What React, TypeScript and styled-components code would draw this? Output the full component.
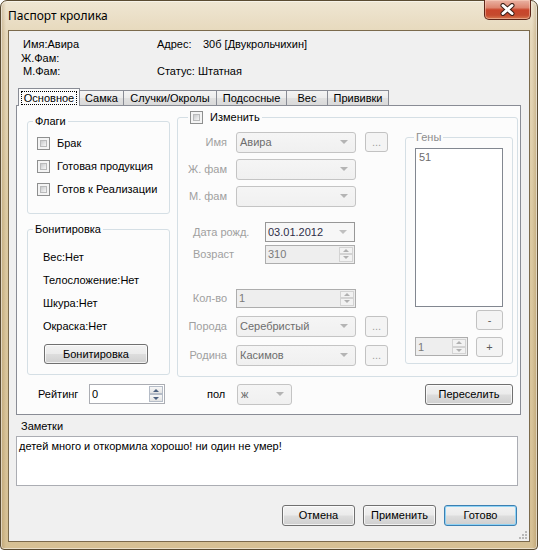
import React from "react";
import styled, { createGlobalStyle, css } from "styled-components";

const GlobalStyle = createGlobalStyle`
  html, body { margin: 0; padding: 0; background: #ffffff; }
  body { font-family: "Liberation Sans", Arial, sans-serif; font-size: 11px; color: #000; }
  *, *::before, *::after { box-sizing: border-box; }
`;

const Window = styled.div`
  width: 538px;
  height: 550px;
  display: flex;
  flex-direction: column;
  border: 1px solid #5a4b32;
  border-radius: 7px 7px 4px 4px;
  background:
    linear-gradient(90deg, rgba(140, 105, 50, 0.3) 0, rgba(140, 105, 50, 0) 5px, rgba(140, 105, 50, 0) calc(100% - 5px), rgba(140, 105, 50, 0.3) 100%),
    linear-gradient(180deg, #efe6d3 0%, #e6d8bb 6%, #dccaa2 40%, #d6c094 100%);
  padding: 0 7px 7px 7px;
  box-shadow: inset 0 0 0 1px rgba(255, 255, 255, 0.5);
`;

const TitleBar = styled.div`
  height: 29px;
  display: flex;
  align-items: flex-start;
  justify-content: space-between;
`;

const Title = styled.div`
  font-family: "Noto Sans", "Liberation Sans", sans-serif;
  font-size: 12px;
  line-height: 16px;
  margin-top: 7px;
  color: #000;
`;

const CloseButton = styled.div`
  width: 47px;
  height: 20px;
  margin: -1px -1px 0 0;
  border: 1px solid #5e2519;
  border-top: none;
  border-radius: 0 0 5px 5px;
  background: linear-gradient(180deg, #eab3a4 0%, #dd8670 40%, #c9452b 52%, #c54a2e 80%, #d7794f 100%);
  box-shadow: inset 0 0 0 1px rgba(255, 220, 200, 0.45);
  display: flex;
  align-items: center;
  justify-content: center;
`;

const Client = styled.div`
  flex: 1;
  position: relative;
  background: #f0f0f0;
  border: 1px solid #7b6a4c;
  display: flex;
  flex-direction: column;
  padding: 0 8px 0 7px;
`;

const Info = styled.div`
  display: grid;
  grid-template-columns: 136px 1fr;
  grid-auto-rows: 13.5px;
  line-height: 13.5px;
  margin: 7px 0 0 5px;
`;

const InfoCell = styled.div<{ $indent?: number }>`
  display: flex;
  padding-left: ${(p) => p.$indent ?? 0}px;
  white-space: nowrap;
`;

const InfoKey = styled.span`
  width: 46px;
`;

const TabStrip = styled.div`
  display: flex;
  align-items: flex-end;
  height: 17px;
  margin-top: 9px;
  padding-left: 2px;
  position: relative;
  z-index: 1;
`;

const Tab = styled.div<{ $w: number; $active?: boolean }>`
  width: ${(p) => p.$w}px;
  border: 1px solid #898c95;
  border-bottom: none;
  display: flex;
  align-items: center;
  justify-content: center;
  white-space: nowrap;
  ${(p) =>
    p.$active
      ? css`
          height: 18px;
          margin-bottom: -1px;
          background: #fcfcfc;
          padding: 2px 2px 1px;
        `
      : css`
          height: 15px;
          margin-left: -1px;
          background: linear-gradient(180deg, #f4f4f4 0%, #ececec 50%, #e1e1e1 51%, #d9d9d9 100%);
          padding-top: 1px;
        `}
`;

const FocusRing = styled.span`
  flex: 1;
  align-self: stretch;
  border: 1px dotted #000;
  display: flex;
  align-items: center;
  justify-content: center;
`;

const Page = styled.div`
  border: 1px solid #898c95;
  background: #fcfcfc;
  padding: 5px 2px 9px 10px;
  display: grid;
  grid-template-columns: 143px 341px;
  column-gap: 7px;
  row-gap: 7px;
  align-items: start;
`;

const LeftCol = styled.div`
  display: flex;
  flex-direction: column;
  gap: 9px;
  margin-top: 4px;
`;

const GroupBox = styled.fieldset<{ $w?: number; $mt?: number }>`
  margin: ${(p) => p.$mt ?? 0}px 0 0 0;
  padding: 0;
  min-width: 0;
  border: 1px solid #d5dfe5;
  border-radius: 3px;
  ${(p) => (p.$w ? `width: ${p.$w}px;` : "")}
`;

const Legend = styled.legend<{ $ml: number; $dim?: boolean }>`
  margin-left: ${(p) => p.$ml}px;
  padding: 0 2px;
  line-height: 13px;
  height: 13px;
  color: ${(p) => (p.$dim ? "#8d8d8d" : "#000")};
  display: flex;
  align-items: center;
  gap: 7px;
`;

const FlagsBody = styled.div`
  display: flex;
  flex-direction: column;
  gap: 6px;
  padding: 7px 0 15px 9px;
`;

const CheckRow = styled.label`
  height: 17px;
  display: flex;
  align-items: center;
  gap: 7px;
  white-space: nowrap;
`;

const CheckBox = styled.span`
  width: 13px;
  height: 13px;
  flex: none;
  border: 1px solid #8e8f8f;
  background: #f4f4f4;
  padding: 2px;
  display: inline-block;
  &::after {
    content: "";
    display: block;
    width: 100%;
    height: 100%;
    background: linear-gradient(135deg, #c8c9cb 0%, #e2e3e4 55%, #f6f6f6 100%);
    border: 1px solid #b9babb;
  }
`;

const BonitBody = styled.div`
  display: flex;
  flex-direction: column;
  padding: 10px 0 10px 15px;
`;

const BonitItem = styled.div`
  line-height: 23px;
  height: 23px;
  white-space: nowrap;
`;

const Button = styled.button<{ $w: number; $h?: number; $default?: boolean; $ml?: number; $mr?: number; $mt?: number }>`
  width: ${(p) => p.$w}px;
  height: ${(p) => p.$h ?? 21}px;
  margin: ${(p) => p.$mt ?? 0}px ${(p) => p.$mr ?? 0}px 0 ${(p) => p.$ml ?? 0}px;
  font-family: inherit;
  font-size: 11px;
  color: #000;
  padding: 0;
  border: 1px solid ${(p) => (p.$default ? "#3c7fb1" : "#707070")};
  border-radius: 3px;
  background: linear-gradient(180deg, #f2f2f2 0%, #ebebeb 48%, #dddddd 52%, #cfcfcf 100%);
  box-shadow: inset 0 0 0 1px ${(p) => (p.$default ? "#8fd3f5" : "rgba(255,255,255,0.7)")};
  flex: none;
`;

const DimButton = styled.div<{ $w: number; $h: number; $mt?: number; $dark?: boolean }>`
  width: ${(p) => p.$w}px;
  height: ${(p) => p.$h}px;
  margin-top: ${(p) => p.$mt ?? 0}px;
  border: 1px solid #c2c2c2;
  border-radius: 3px;
  background: #f4f4f4;
  color: ${(p) => (p.$dark ? "#5a5a5a" : "#a0a0a0")};
  display: flex;
  align-items: center;
  justify-content: center;
  flex: none;
`;

const ChangeBody = styled.div`
  display: flex;
  justify-content: space-between;
  align-items: flex-start;
  padding: 8px 4px 10px 6px;
`;

const Form = styled.div`
  display: flex;
  flex-direction: column;
  width: 204px;
`;

const FormRow = styled.div<{ $mt?: number; $date?: boolean }>`
  display: grid;
  grid-template-columns: ${(p) => (p.$date ? "72px 90px" : "43px 120px 23px")};
  column-gap: ${(p) => (p.$date ? 0 : 9)}px;
  align-items: center;
  margin-top: ${(p) => p.$mt ?? 0}px;
  margin-left: ${(p) => (p.$date ? 9 : 0)}px;
`;

const FieldLabel = styled.span<{ $left?: boolean }>`
  color: #a0a0a0;
  text-align: ${(p) => (p.$left ? "left" : "right")};
  white-space: nowrap;
`;

const Combo = styled.div<{ $w?: number; $h?: number; $ml?: number }>`
  ${(p) => (p.$w ? `width: ${p.$w}px;` : "")}
  height: ${(p) => p.$h ?? 21}px;
  margin-left: ${(p) => p.$ml ?? 0}px;
  border: 1px solid #c4c4c4;
  border-radius: 3px;
  background: linear-gradient(180deg, #f5f5f5 0%, #f0f0f0 100%);
  color: #6d6d6d;
  display: flex;
  align-items: center;
  padding-left: 3px;
  flex: none;
`;

const ComboText = styled.span`
  flex: 1;
  white-space: nowrap;
`;

const ComboArrow = styled.span<{ $color?: string }>`
  width: 0;
  height: 0;
  border-left: 4px solid transparent;
  border-right: 4px solid transparent;
  border-top: 4px solid ${(p) => p.$color ?? "#b4b4b4"};
  margin-right: 7px;
`;

const DateBox = styled.div`
  height: 20px;
  border: 1px solid #979797;
  background: #f7f7f7;
  color: #2e2e48;
  display: flex;
  align-items: center;
  padding-left: 2px;
`;

const Spin = styled.div<{ $w?: number; $h: number; $enabled?: boolean }>`
  ${(p) => (p.$w ? `width: ${p.$w}px;` : "")}
  height: ${(p) => p.$h}px;
  border: 1px solid ${(p) => (p.$enabled ? "#abadb3" : "#adadad")};
  background: ${(p) => (p.$enabled ? "#ffffff" : "#eeeeee")};
  color: ${(p) => (p.$enabled ? "#000" : "#7a7a7a")};
  display: flex;
  flex: none;
`;

const SpinValue = styled.span`
  flex: 1;
  display: flex;
  align-items: center;
  padding-left: 2px;
`;

const SpinButtons = styled.div`
  width: 16px;
  display: flex;
  flex-direction: column;
  padding: 1px;
  gap: 0;
`;

const SpinBtn = styled.div<{ $enabled?: boolean }>`
  flex: 1;
  border: 1px solid ${(p) => (p.$enabled ? "#b5bcc7" : "#d3d3d3")};
  background: ${(p) => (p.$enabled ? "linear-gradient(180deg,#f7f7f7,#e3e3e3)" : "#f2f2f2")};
  display: flex;
  align-items: center;
  justify-content: center;
`;

const SpinArrow = styled.span<{ $up?: boolean; $enabled?: boolean }>`
  width: 0;
  height: 0;
  border-left: 3px solid transparent;
  border-right: 3px solid transparent;
  ${(p) => (p.$up ? "border-bottom" : "border-top")}: 3px solid ${(p) => (p.$enabled ? "#4c607f" : "#b0b0b0")};
`;

const GenesBody = styled.div`
  display: flex;
  flex-direction: column;
  padding: 4px 9px 6px 9px;
`;

const ListBox = styled.div`
  height: 159px;
  border: 1px solid #828790;
  background: #ffffff;
  color: #6d6d6d;
  padding: 1px 3px;
  line-height: 14px;
`;

const GenesRow = styled.div`
  display: flex;
  align-items: center;
  justify-content: space-between;
  margin-top: 7px;
`;

const BottomRow = styled.div`
  grid-column: 1 / -1;
  display: flex;
  align-items: center;
  height: 21px;
`;

const PlainLabel = styled.span<{ $w: number; $ml?: number }>`
  width: ${(p) => p.$w}px;
  margin-left: ${(p) => p.$ml ?? 0}px;
  white-space: nowrap;
  flex: none;
`;

const NotesLabel = styled.div`
  margin: 5.5px 0 0 5px;
  line-height: 13px;
`;

const Notes = styled.div`
  height: 50px;
  margin: 2.5px 3px 0 0;
  border: 1px solid #abadb3;
  background: #ffffff;
  padding: 3px 2px;
  line-height: 13px;
`;

const ButtonRow = styled.div`
  display: flex;
  justify-content: flex-end;
  gap: 8px;
  margin: 19px 4px 0 0;
`;

const Grip = styled.svg`
  position: absolute;
  right: 1px;
  bottom: 1px;
`;

const Arrowed = ({ text, color }: { text?: string; color?: string }) => (
  <>
    <ComboText>{text}</ComboText>
    <ComboArrow $color={color} />
  </>
);

const Spinner = ({ value, enabled }: { value: string; enabled?: boolean }) => (
  <>
    <SpinValue>{value}</SpinValue>
    <SpinButtons>
      <SpinBtn $enabled={enabled}>
        <SpinArrow $up $enabled={enabled} />
      </SpinBtn>
      <SpinBtn $enabled={enabled}>
        <SpinArrow $enabled={enabled} />
      </SpinBtn>
    </SpinButtons>
  </>
);

const tabs = [
  { label: "Основное", w: 62 },
  { label: "Самка", w: 45 },
  { label: "Случки/Окролы", w: 94 },
  { label: "Подсосные", w: 71 },
  { label: "Вес", w: 42 },
  { label: "Прививки", w: 62 },
];

export default function App() {
  return (
    <>
      <GlobalStyle />
      <Window>
        <TitleBar>
          <Title>Паспорт кролика</Title>
          <CloseButton>
            <svg width="15" height="13" viewBox="0 0 15 13">
              <path d="M3 2.5 L12 10.5 M12 2.5 L3 10.5" stroke="#3a1e16" strokeWidth="5" strokeLinecap="round" />
              <path d="M3 2.5 L12 10.5 M12 2.5 L3 10.5" stroke="#ffffff" strokeWidth="3" strokeLinecap="round" />
            </svg>
          </CloseButton>
        </TitleBar>
        <Client>
          <Info>
            <InfoCell $indent={2}>Имя:Авира</InfoCell>
            <InfoCell>
              <InfoKey>Адрес:</InfoKey>30б [Двукрольчихин]
            </InfoCell>
            <InfoCell>Ж.Фам:</InfoCell>
            <InfoCell />
            <InfoCell $indent={2}>М.Фам:</InfoCell>
            <InfoCell>Статус: Штатная</InfoCell>
          </Info>

          <TabStrip>
            {tabs.map((t, i) => (
              <Tab key={t.label} $w={t.w} $active={i === 0}>
                {i === 0 ? <FocusRing>{t.label}</FocusRing> : t.label}
              </Tab>
            ))}
          </TabStrip>
          <Page>
            <LeftCol>
              <GroupBox>
                <Legend $ml={5}>Флаги</Legend>
                <FlagsBody>
                  <CheckRow>
                    <CheckBox />
                    Брак
                  </CheckRow>
                  <CheckRow>
                    <CheckBox />
                    Готовая продукция
                  </CheckRow>
                  <CheckRow>
                    <CheckBox />
                    Готов к Реализации
                  </CheckRow>
                </FlagsBody>
              </GroupBox>
              <GroupBox>
                <Legend $ml={5}>Бонитировка</Legend>
                <BonitBody>
                  <BonitItem>Вес:Нет</BonitItem>
                  <BonitItem>Телосложение:Нет</BonitItem>
                  <BonitItem>Шкура:Нет</BonitItem>
                  <BonitItem>Окраска:Нет</BonitItem>
                  <Button $w={104} $h={20} $mt={6} $ml={1}>
                    Бонитировка
                  </Button>
                </BonitBody>
              </GroupBox>
            </LeftCol>

            <GroupBox>
              <Legend $ml={10}>
                <CheckBox />
                Изменить
              </Legend>
              <ChangeBody>
                <Form>
                  <FormRow>
                    <FieldLabel>Имя</FieldLabel>
                    <Combo>
                      <Arrowed text="Авира" />
                    </Combo>
                    <DimButton $w={23} $h={20}>...</DimButton>
                  </FormRow>
                  <FormRow $mt={6}>
                    <FieldLabel>Ж. фам</FieldLabel>
                    <Combo>
                      <Arrowed />
                    </Combo>
                  </FormRow>
                  <FormRow $mt={6}>
                    <FieldLabel>М. фам</FieldLabel>
                    <Combo>
                      <Arrowed />
                    </Combo>
                  </FormRow>
                  <FormRow $mt={15} $date>
                    <FieldLabel $left>Дата рожд.</FieldLabel>
                    <DateBox>
                      <Arrowed text="03.01.2012" color="#c0c0c0" />
                    </DateBox>
                  </FormRow>
                  <FormRow $mt={3} $date>
                    <FieldLabel $left>Возраст</FieldLabel>
                    <Spin $h={19}>
                      <Spinner value="310" />
                    </Spin>
                  </FormRow>
                  <FormRow $mt={25}>
                    <FieldLabel>Кол-во</FieldLabel>
                    <Spin $h={19}>
                      <Spinner value="1" />
                    </Spin>
                  </FormRow>
                  <FormRow $mt={8}>
                    <FieldLabel>Порода</FieldLabel>
                    <Combo>
                      <Arrowed text="Серебристый" />
                    </Combo>
                    <DimButton $w={23} $h={21}>...</DimButton>
                  </FormRow>
                  <FormRow $mt={8}>
                    <FieldLabel>Родина</FieldLabel>
                    <Combo>
                      <Arrowed text="Касимов" />
                    </Combo>
                    <DimButton $w={23} $h={21}>...</DimButton>
                  </FormRow>
                </Form>

                <GroupBox $w={108} $mt={-1}>
                  <Legend $ml={8} $dim>
                    Гены
                  </Legend>
                  <GenesBody>
                    <ListBox>51</ListBox>
                    <DimButton $w={27} $h={20} $mt={3} $dark style={{ alignSelf: "flex-end" }}>
                      -
                    </DimButton>
                    <GenesRow>
                      <Spin $w={53} $h={19}>
                        <Spinner value="1" />
                      </Spin>
                      <DimButton $w={27} $h={20} $dark>
                        +
                      </DimButton>
                    </GenesRow>
                  </GenesBody>
                </GroupBox>
              </ChangeBody>
            </GroupBox>

            <BottomRow>
              <PlainLabel $w={51} $ml={11}>
                Рейтинг
              </PlainLabel>
              <Spin $w={76} $h={20} $enabled>
                <Spinner value="0" enabled />
              </Spin>
              <PlainLabel $w={30} $ml={42}>
                пол
              </PlainLabel>
              <Combo $w={55}>
                <Arrowed text="ж" />
              </Combo>
              <Button $w={88} $ml={133} $mr={5}>
                Переселить
              </Button>
            </BottomRow>
          </Page>

          <NotesLabel>Заметки</NotesLabel>
          <Notes>детей много и откормила хорошо! ни один не умер!</Notes>

          <ButtonRow>
            <Button $w={73}>Отмена</Button>
            <Button $w={73}>Применить</Button>
            <Button $w={73} $default>
              Готово
            </Button>
          </ButtonRow>

          <Grip width="10" height="10" viewBox="0 0 10 10">
            {[
              [7, 1],
              [4, 4],
              [7, 4],
              [1, 7],
              [4, 7],
              [7, 7],
            ].map(([x, y]) => (
              <rect key={`${x}-${y}`} x={x} y={y} width="2" height="2" fill="#b8b8b8" />
            ))}
          </Grip>
        </Client>
      </Window>
    </>
  );
}
